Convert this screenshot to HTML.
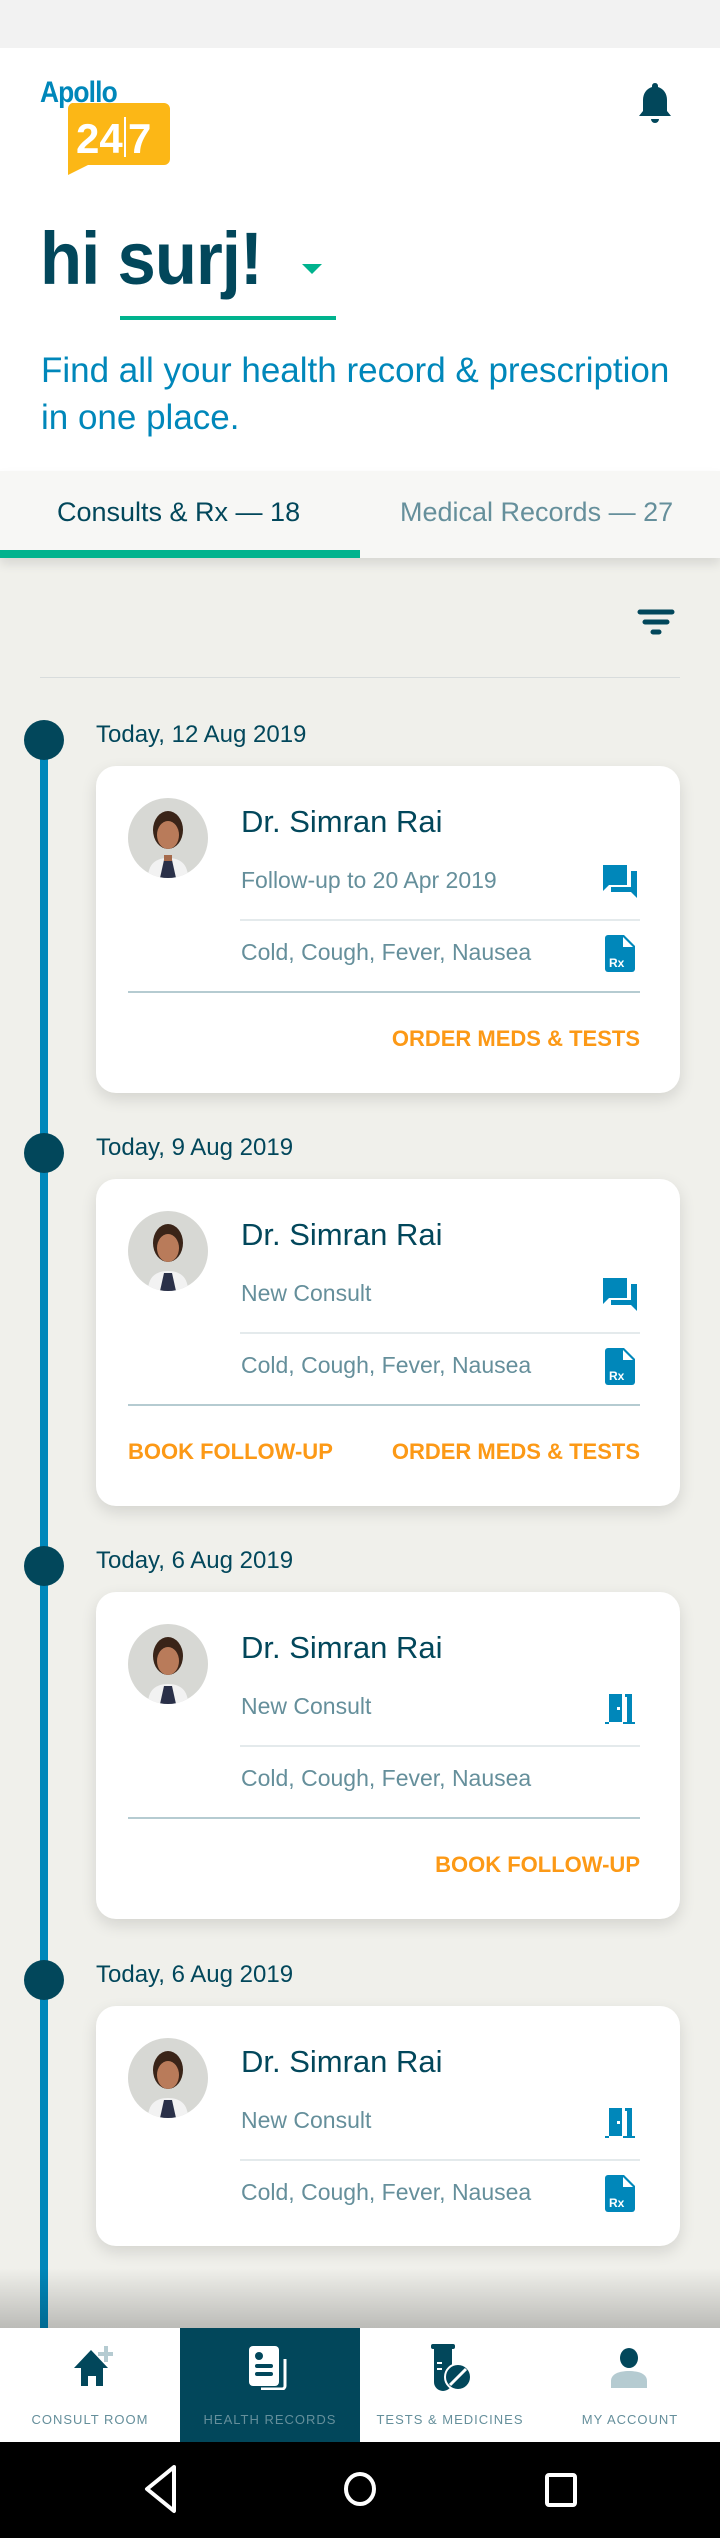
<!DOCTYPE html>
<html><head><meta charset="utf-8">
<style>
*{margin:0;padding:0;box-sizing:border-box}
body{width:720px;height:2538px;background:#f0f0eb;font-family:"Liberation Sans",sans-serif;position:relative;overflow:hidden}
.a{position:absolute;white-space:nowrap}
.c{display:inline-block}
.card{position:absolute;left:96px;width:584px;background:#fff;border-radius:20px;box-shadow:0 6px 16px rgba(0,0,0,.12)}
.dot{position:absolute;left:24px;width:40px;height:40px;border-radius:50%;background:#02475b}
.date{position:absolute;left:96px;font-size:24px;color:#02475b}
.name{position:absolute;left:145px;font-size:31px;color:#02475b}
.sub{position:absolute;left:145px;font-size:23px;color:#658f9b}
.ln{position:absolute;height:2px;background:#e4eaec}
.act{position:absolute;font-size:22px;font-weight:bold;color:#fc9916}
.nl{position:absolute;top:2412px;font-size:13px;letter-spacing:1px;color:#658f9b;width:180px;text-align:center}
</style></head><body>
<div class="a" style="left:0;top:0;width:720px;height:48px;background:#f2f2f2"></div>
<div class="a" style="left:0;top:48px;width:720px;height:423px;background:#fff"></div>
<div class="a" style="left:40px;top:76px;font-size:30px;font-weight:bold;color:#0087ba;letter-spacing:-1px"><span class="c" style="transform:scaleX(.88);transform-origin:0 0">Apollo</span></div>
<svg class="a" style="left:66px;top:103px" width="104" height="72"><path d="M6 0H98a6 6 0 0 1 6 6V56a6 6 0 0 1-6 6H22L2 72V6a6 6 0 0 1 4-6z" fill="#fcb716"/><text x="10" y="50" font-family="Liberation Sans" font-weight="bold" font-size="42" fill="#fff">24</text><rect x="58" y="14" width="2" height="40" fill="#fff"/><text x="62" y="50" font-family="Liberation Sans" font-weight="bold" font-size="42" fill="#fff">7</text></svg>
<svg class="a" style="left:638px;top:83px" width="34" height="42" viewBox="0 0 34 42"><path d="M17 0c2 0 3 1.5 3 3v1c6 2 9 7 9 13v11l4 5H1l4-5V17c0-6 3-11 9-13V3c0-1.5 1-3 3-3z" fill="#02475b"/><path d="M13 36h8a4 4 0 0 1-8 0z" fill="#02475b"/></svg>
<div class="a" style="left:40px;top:216px;font-size:74px;font-weight:bold;color:#02475b;letter-spacing:-1px"><span class="c" style="transform:scaleX(.93);transform-origin:0 0">hi surj!</span></div>
<svg class="a" style="left:302px;top:264px" width="20" height="10"><path d="M0 0H20L10 10z" fill="#00b38e"/></svg>
<div class="a" style="left:120px;top:316px;width:216px;height:4px;background:#00b38e"></div>
<div class="a" style="left:41px;top:347px;font-size:35px;color:#0087ba;line-height:47px"><span class="c">Find all your health record &amp; prescription<br>in one place.</span></div>
<div class="a" style="left:0;top:471px;width:720px;height:87px;background:#f7f7f5;box-shadow:0 6px 10px rgba(0,0,0,.1)"></div>
<div class="a" style="left:57px;top:497px;font-size:27px;color:#02475b"><span class="c">Consults &amp; Rx — 18</span></div>
<div class="a" style="left:400px;top:497px;font-size:27px;color:#658f9b"><span class="c">Medical Records — 27</span></div>
<div class="a" style="left:0;top:550px;width:360px;height:8px;background:#00b38e"></div>
<svg class="a" style="left:636px;top:608px" width="40" height="28"><g stroke="#02475b" stroke-width="5" stroke-linecap="round"><path d="M4 4H36M9 14H31M17 24H23"/></g></svg>
<div class="a" style="left:40px;top:677px;width:640px;height:1px;background:#d8dcdc"></div>
<div class="a" style="left:40px;top:740px;width:8px;height:1588px;background:#0087ba"></div>

<div class="dot" style="top:720px"></div><div class="date" style="top:721px">Today, 12 Aug 2019</div>
<div class="card" style="top:766px;height:327px">
 <svg class="a" style="left:32px;top:32px" width="80" height="80" viewBox="0 0 80 80"><defs><clipPath id="cp"><circle cx="40" cy="40" r="40"/></clipPath></defs><g clip-path="url(#cp)"><rect width="80" height="80" fill="#d7d8d4"/><path d="M20 80c0-14 8-20 20-20s20 6 20 20z" fill="#f2f2f2"/><path d="M32 80l4-18h8l4 18z" fill="#2a3048"/><ellipse cx="40" cy="32" rx="15" ry="19" fill="#3a2418"/><ellipse cx="40" cy="37" rx="11" ry="14" fill="#b97b5a"/><path d="M36 57h8v6h-8z" fill="#a56a4b"/></g></svg>
 <div class="name" style="top:38px">Dr. Simran Rai</div>
 <div class="sub" style="top:101px">Follow-up to 20 Apr 2019</div>
 <svg class="a" style="left:507px;top:99px" width="34" height="33"><path d="M0 0H24V20H6L0 26z" fill="#0087ba"/><path d="M28 6H34V33L28 27H8V22H28z" fill="#0087ba"/></svg>
 <div class="ln" style="left:144px;top:153px;width:400px"></div>
 <div class="sub" style="top:173px">Cold, Cough, Fever, Nausea</div>
 <svg class="a" style="left:509px;top:169px" width="30" height="37"><path d="M3 0H19L30 11V34a3 3 0 0 1-3 3H3a3 3 0 0 1-3-3V3a3 3 0 0 1 3-3z" fill="#0087ba"/><path d="M18 2V12H28z" fill="#fff"/><text x="4" y="32" font-family="Liberation Sans" font-weight="bold" font-size="12" fill="#fff">Rx</text></svg>
 <div class="ln" style="left:32px;top:225px;width:512px;background:#b5cbd1"></div>
 <div class="act" style="right:40px;top:260px">ORDER MEDS &amp; TESTS</div>
</div>

<div class="dot" style="top:1133px"></div><div class="date" style="top:1134px">Today, 9 Aug 2019</div>
<div class="card" style="top:1179px;height:327px">
 <svg class="a" style="left:32px;top:32px" width="80" height="80" viewBox="0 0 80 80"><g clip-path="url(#cp)"><rect width="80" height="80" fill="#d7d8d4"/><path d="M20 80c0-14 8-20 20-20s20 6 20 20z" fill="#f2f2f2"/><path d="M32 80l4-18h8l4 18z" fill="#2a3048"/><ellipse cx="40" cy="32" rx="15" ry="19" fill="#3a2418"/><ellipse cx="40" cy="37" rx="11" ry="14" fill="#b97b5a"/></g></svg>
 <div class="name" style="top:38px">Dr. Simran Rai</div>
 <div class="sub" style="top:101px">New Consult</div>
 <svg class="a" style="left:507px;top:99px" width="34" height="33"><path d="M0 0H24V20H6L0 26z" fill="#0087ba"/><path d="M28 6H34V33L28 27H8V22H28z" fill="#0087ba"/></svg>
 <div class="ln" style="left:144px;top:153px;width:400px"></div>
 <div class="sub" style="top:173px">Cold, Cough, Fever, Nausea</div>
 <svg class="a" style="left:509px;top:169px" width="30" height="37"><path d="M3 0H19L30 11V34a3 3 0 0 1-3 3H3a3 3 0 0 1-3-3V3a3 3 0 0 1 3-3z" fill="#0087ba"/><path d="M18 2V12H28z" fill="#fff"/><text x="4" y="32" font-family="Liberation Sans" font-weight="bold" font-size="12" fill="#fff">Rx</text></svg>
 <div class="ln" style="left:32px;top:225px;width:512px;background:#b5cbd1"></div>
 <div class="act" style="left:32px;top:260px">BOOK FOLLOW-UP</div>
 <div class="act" style="right:40px;top:260px">ORDER MEDS &amp; TESTS</div>
</div>

<div class="dot" style="top:1546px"></div><div class="date" style="top:1547px">Today, 6 Aug 2019</div>
<div class="card" style="top:1592px;height:327px">
 <svg class="a" style="left:32px;top:32px" width="80" height="80" viewBox="0 0 80 80"><g clip-path="url(#cp)"><rect width="80" height="80" fill="#d7d8d4"/><path d="M20 80c0-14 8-20 20-20s20 6 20 20z" fill="#f2f2f2"/><path d="M32 80l4-18h8l4 18z" fill="#2a3048"/><ellipse cx="40" cy="32" rx="15" ry="19" fill="#3a2418"/><ellipse cx="40" cy="37" rx="11" ry="14" fill="#b97b5a"/></g></svg>
 <div class="name" style="top:38px">Dr. Simran Rai</div>
 <div class="sub" style="top:101px">New Consult</div>
 <svg class="a" style="left:509px;top:102px" width="30" height="30"><path d="M4 0H17V28H4z M20 0H27V28H30V30H18V28H22V3H20z M0 28H4V30H0z" fill="#0087ba"/><rect x="12" y="13" width="3" height="3" fill="#fff"/></svg>
 <div class="ln" style="left:144px;top:153px;width:400px"></div>
 <div class="sub" style="top:173px">Cold, Cough, Fever, Nausea</div>
 <div class="ln" style="left:32px;top:225px;width:512px;background:#b5cbd1"></div>
 <div class="act" style="right:40px;top:260px">BOOK FOLLOW-UP</div>
</div>

<div class="dot" style="top:1960px"></div><div class="date" style="top:1961px">Today, 6 Aug 2019</div>
<div class="card" style="top:2006px;height:240px">
 <svg class="a" style="left:32px;top:32px" width="80" height="80" viewBox="0 0 80 80"><g clip-path="url(#cp)"><rect width="80" height="80" fill="#d7d8d4"/><path d="M20 80c0-14 8-20 20-20s20 6 20 20z" fill="#f2f2f2"/><path d="M32 80l4-18h8l4 18z" fill="#2a3048"/><ellipse cx="40" cy="32" rx="15" ry="19" fill="#3a2418"/><ellipse cx="40" cy="37" rx="11" ry="14" fill="#b97b5a"/></g></svg>
 <div class="name" style="top:38px">Dr. Simran Rai</div>
 <div class="sub" style="top:101px">New Consult</div>
 <svg class="a" style="left:509px;top:102px" width="30" height="30"><path d="M4 0H17V28H4z M20 0H27V28H30V30H18V28H22V3H20z M0 28H4V30H0z" fill="#0087ba"/><rect x="12" y="13" width="3" height="3" fill="#fff"/></svg>
 <div class="ln" style="left:144px;top:153px;width:400px"></div>
 <div class="sub" style="top:173px">Cold, Cough, Fever, Nausea</div>
 <svg class="a" style="left:509px;top:169px" width="30" height="37"><path d="M3 0H19L30 11V34a3 3 0 0 1-3 3H3a3 3 0 0 1-3-3V3a3 3 0 0 1 3-3z" fill="#0087ba"/><path d="M18 2V12H28z" fill="#fff"/><text x="4" y="32" font-family="Liberation Sans" font-weight="bold" font-size="12" fill="#fff">Rx</text></svg>
</div>

<div class="a" style="left:0;top:2268px;width:720px;height:60px;background:linear-gradient(rgba(0,0,0,0),rgba(0,0,0,.22))"></div>
<div class="a" style="left:0;top:2328px;width:720px;height:114px;background:#fff"></div>
<div class="a" style="left:180px;top:2328px;width:180px;height:114px;background:#02475b"></div>
<svg class="a" style="left:71px;top:2346px" width="42" height="40"><path d="M20 4L37 22H32V40H25V30H17V40H10V22H3z" fill="#02475b"/><path d="M33 0h4v6h6v4h-6v6h-4v-6h-6v-4h6z" fill="#b5cbd1"/></svg>
<svg class="a" style="left:249px;top:2346px" width="44" height="44"><rect x="0" y="0" width="30" height="40" rx="4" fill="#fff"/><circle cx="10" cy="10" r="4" fill="#02475b"/><rect x="6" y="18" width="18" height="4" rx="2" fill="#02475b"/><rect x="6" y="26" width="18" height="4" rx="2" fill="#02475b"/><path d="M36 13V40a3 3 0 0 1-3 3H12" stroke="#fff" stroke-width="3" fill="none"/></svg>
<svg class="a" style="left:431px;top:2344px" width="40" height="48"><rect x="0" y="0" width="24" height="5" rx="2" fill="#02475b"/><path d="M3 5H21V38a9 9 0 0 1-18 0z" fill="#02475b"/><rect x="6" y="18" width="5" height="2" fill="#fff"/><rect x="6" y="24" width="5" height="2" fill="#fff"/><circle cx="27" cy="33" r="13" fill="#02475b" stroke="#fff" stroke-width="2"/><path d="M19 41L35 25" stroke="#fff" stroke-width="3"/></svg>
<svg class="a" style="left:610px;top:2348px" width="38" height="40"><ellipse cx="19" cy="10" rx="9" ry="10" fill="#02475b"/><path d="M1 40V33c0-7 8-10 18-10s18 3 18 10v7z" fill="#b5cbd1"/></svg>
<div class="nl" style="left:0">CONSULT ROOM</div>
<div class="nl" style="left:180px">HEALTH RECORDS</div>
<div class="nl" style="left:360px">TESTS &amp; MEDICINES</div>
<div class="nl" style="left:540px">MY ACCOUNT</div>
<div class="a" style="left:0;top:2442px;width:720px;height:96px;background:#000"></div>
<svg class="a" style="left:140px;top:2465px" width="440" height="50"><path d="M32 5L5 27L32 49z" stroke="#fff" stroke-width="4" fill="none" stroke-linejoin="round" transform="translate(2,-3)"/><ellipse cx="220" cy="24" rx="14" ry="15" stroke="#fff" stroke-width="4" fill="none"/><rect x="407" y="10" width="28" height="30" rx="2" stroke="#fff" stroke-width="4" fill="none"/></svg>
</body></html>
